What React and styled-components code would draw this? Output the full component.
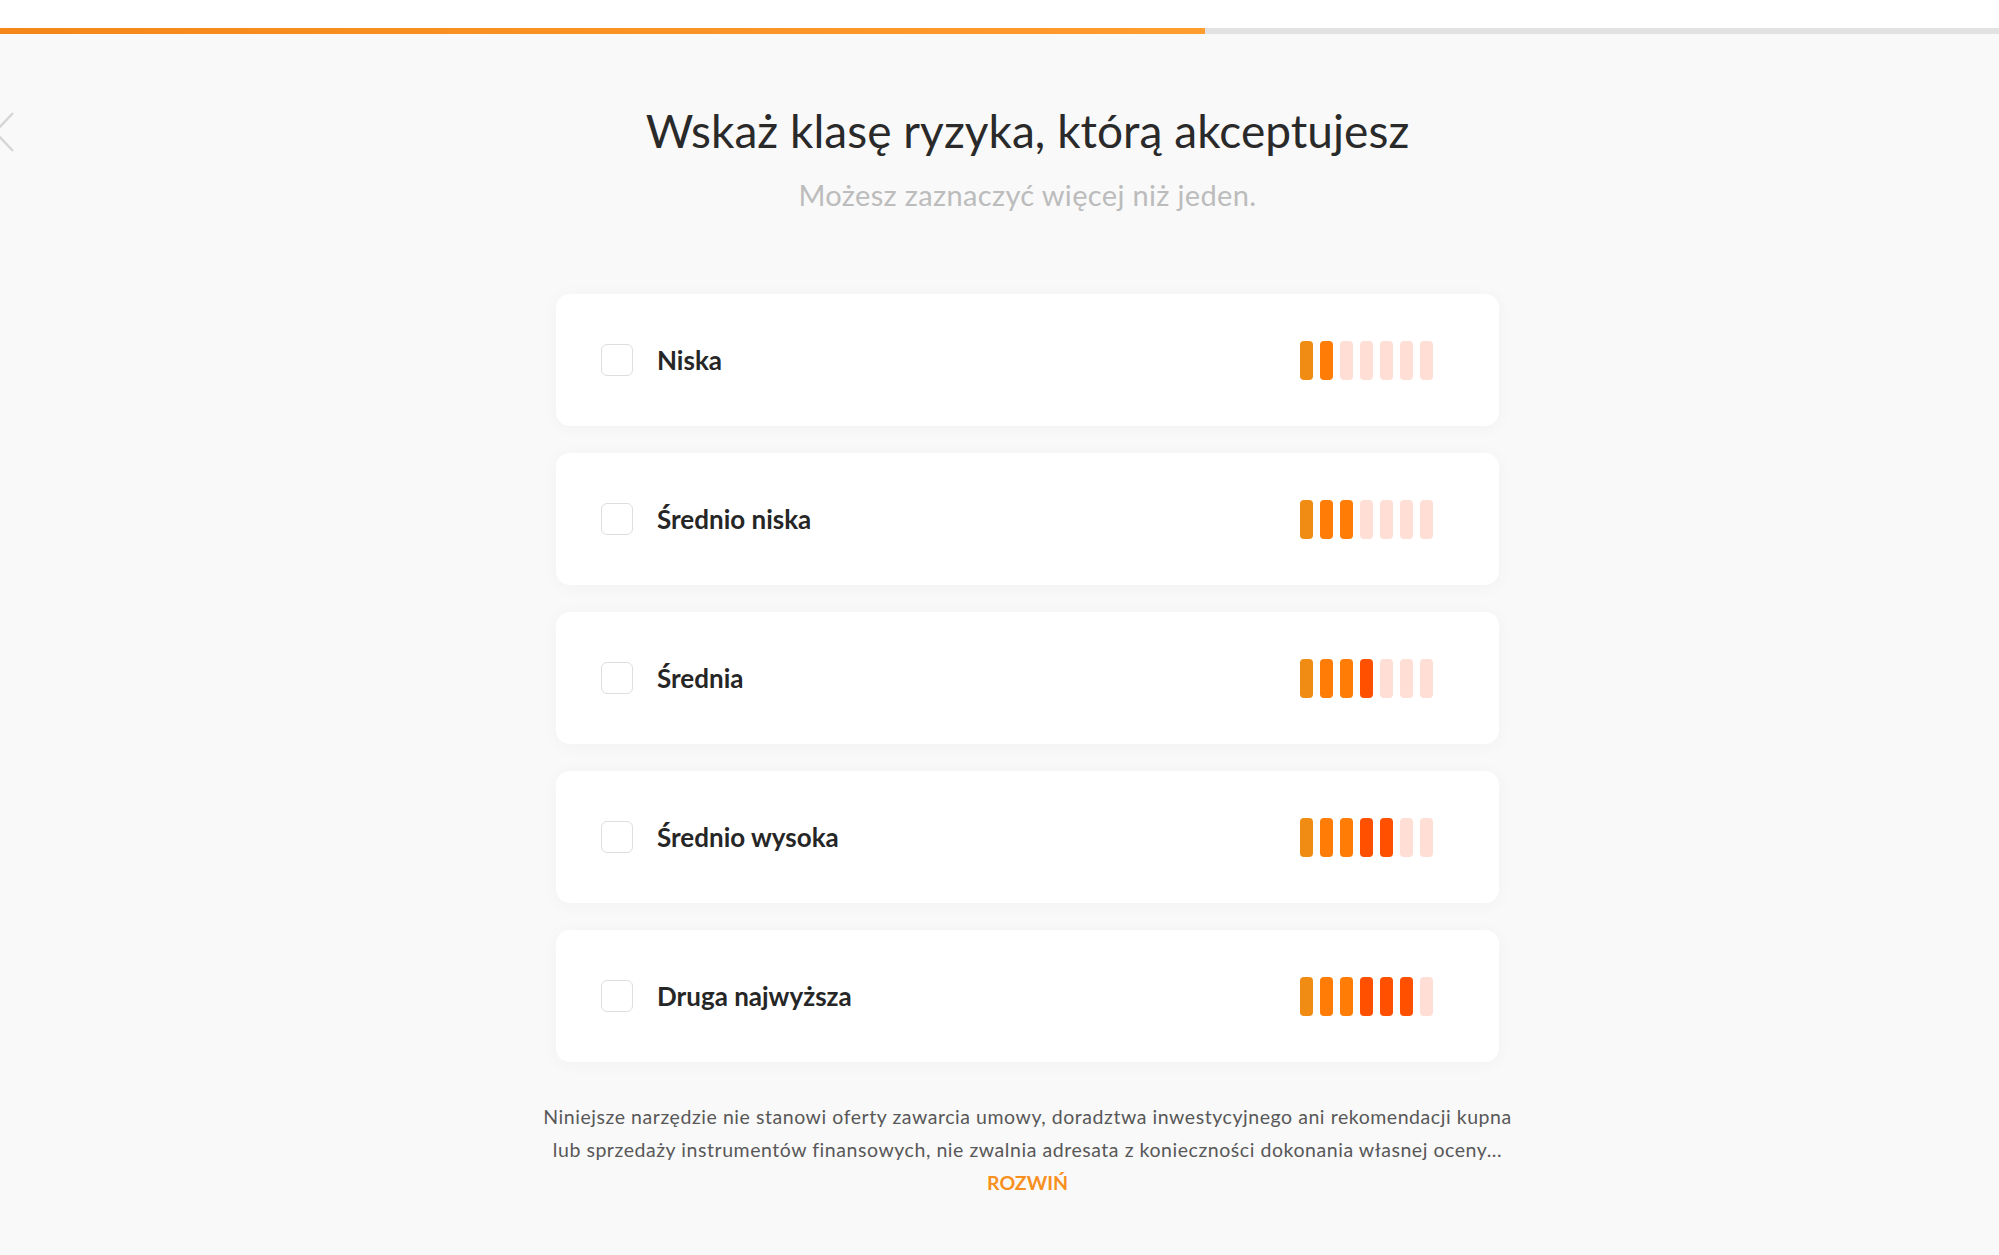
import React, { useState } from "react";
import styled, { createGlobalStyle } from "styled-components";

const GlobalStyle = createGlobalStyle`
  html, body {
    margin: 0;
    padding: 0;
    background: #f9f9f9;
  }
  body {
    font-family: Lato, "Open Sans", "Liberation Sans", sans-serif;
    color: #2b2b2b;
  }
`;

const riskLevels = [
  { label: "Niska", level: 2 },
  { label: "Średnio niska", level: 3 },
  { label: "Średnia", level: 4 },
  { label: "Średnio wysoka", level: 5 },
  { label: "Druga najwyższa", level: 6 },
];

// colour of each filled bar, by position
const barColors = ["#f08c14", "#ff7d07", "#ff7d07", "#ff5000", "#ff5000", "#ff5000", "#ff5000"];

// top
const TopStrip = styled.div`
  height: 28px;
  background: #fff;
`;
const Progress = styled.div`
  height: 6px;
  background: #e2e2e2;
`;
const ProgressFill = styled.div`
  height: 100%;
  background: linear-gradient(90deg, #f5871a 0%, #ff9d2e 100%);
`;

// layout
const Page = styled.div`
  display: grid;
  grid-template-columns: 56px 1fr;
  min-height: 1221px;
`;
const Side = styled.div`
  padding-top: 78px;
  overflow: hidden;
`;
const BackButton = styled.button`
  display: block;
  margin-left: -7px;
  padding: 0;
  border: 0;
  background: transparent;
  cursor: pointer;
`;
const Main = styled.main`
  display: flex;
  flex-direction: column;
  align-items: center;
  padding-top: 69px;
`;
const Title = styled.h1`
  margin: 0;
  font-size: 46px;
  line-height: 56px;
  font-weight: 400;
  color: #2a2a2a;
  letter-spacing: 0.05px;
`;
const Subtitle = styled.p`
  margin: 18px 0 0;
  font-size: 29px;
  line-height: 36px;
  color: #bcbcbc;
  letter-spacing: 0.35px;
`;

// list
const List = styled.ul`
  list-style: none;
  margin: 81px 0 0;
  padding: 0;
  width: 943px;
  display: flex;
  flex-direction: column;
  gap: 27px;
`;
const Card = styled.li`
  height: 132px;
  display: flex;
  align-items: center;
  padding: 0 66px 0 45px;
  background: #fff;
  border-radius: 14px;
  box-shadow: 0 2px 18px rgba(0, 0, 0, 0.035);
  box-sizing: border-box;
  cursor: pointer;
`;
const Check = styled.span`
  width: 32px;
  height: 32px;
  box-sizing: border-box;
  border: 1.5px solid ${(props) => (props.$checked ? "#f7901e" : "#dedede")};
  background: ${(props) => (props.$checked ? "#f7901e" : "#fff")};
  border-radius: 6px;
  flex-shrink: 0;
`;
const Label = styled.span`
  flex: 1;
  margin-left: 24px;
  font-size: 26px;
  font-weight: 700;
  color: #262626;
`;
const Bars = styled.div`
  display: flex;
  gap: 7px;
`;
const Bar = styled.span`
  width: 13px;
  height: 39px;
  border-radius: 4px;
  background: ${(props) => props.$color || "#ffded6"};
`;

// disclaimer
const Disclaimer = styled.p`
  margin: 38px 0 0;
  width: 990px;
  text-align: center;
  font-size: 19.5px;
  line-height: 33px;
  color: #585858;
  letter-spacing: 0.55px;
`;
const More = styled.button`
  display: block;
  margin: 0 auto;
  padding: 0;
  border: 0;
  background: transparent;
  font-family: inherit;
  font-size: 19.5px;
  line-height: 33px;
  font-weight: 700;
  letter-spacing: 0;
  color: #f7901e;
  cursor: pointer;
`;

export default function App() {
  const [checked, setChecked] = useState([]);

  const toggle = (i) => {
    setChecked((prev) => (prev.includes(i) ? prev.filter((x) => x !== i) : [...prev, i]));
  };

  return (
    <>
      <GlobalStyle />
      <TopStrip />
      <Progress>
        <ProgressFill style={{ width: "60.3%" }} />
      </Progress>
      <Page>
        <Side>
          <BackButton aria-label="Wstecz">
            <svg width="22" height="40" viewBox="0 0 22 40" fill="none">
              <path d="M20 1 L2 20 L20 39" stroke="#d6d6d6" strokeWidth="2.4" />
            </svg>
          </BackButton>
        </Side>
        <Main>
          <Title>Wskaż klasę ryzyka, którą akceptujesz</Title>
          <Subtitle>Możesz zaznaczyć więcej niż jeden.</Subtitle>
          <List>
            {riskLevels.map((item, i) => (
              <Card key={i} onClick={() => toggle(i)}>
                <Check $checked={checked.includes(i)} />
                <Label>{item.label}</Label>
                <Bars>
                  {barColors.map((c, j) => (
                    <Bar key={j} $color={j < item.level ? c : null} />
                  ))}
                </Bars>
              </Card>
            ))}
          </List>
          <Disclaimer>
            Niniejsze narzędzie nie stanowi oferty zawarcia umowy, doradztwa inwestycyjnego ani rekomendacji kupna
            lub sprzedaży instrumentów finansowych, nie zwalnia adresata z konieczności dokonania własnej oceny...
            <More>ROZWIŃ</More>
          </Disclaimer>
        </Main>
      </Page>
    </>
  );
}
